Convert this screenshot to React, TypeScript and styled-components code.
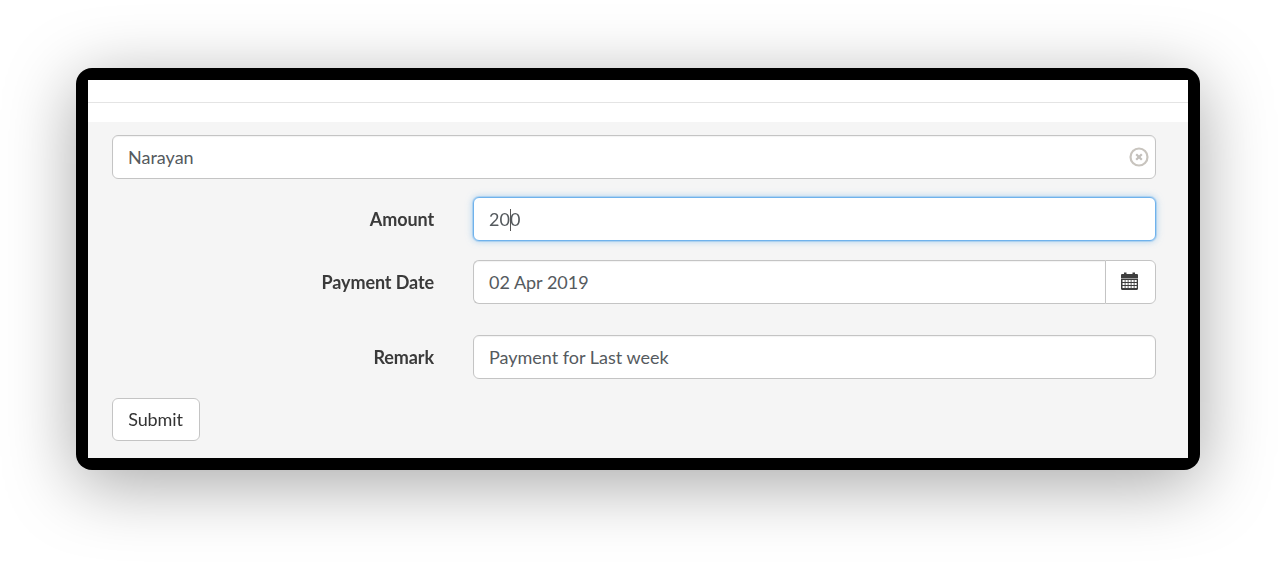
import React from "react";
import styled, { createGlobalStyle } from "styled-components";

const Global = createGlobalStyle`
  html, body { margin: 0; padding: 0; background: #fff; height: 100%; overflow: hidden; }
  #root { font-family: Lato, "Open Sans", sans-serif; }
  * { box-sizing: border-box; }
`;

const Page = styled.div`
  width: 1284px;
  height: 562px;
  padding: 68px 84px 92px 76px;
`;

const Frame = styled.div`
  width: 1124px;
  height: 402px;
  padding: 12px;
  background: #000;
  border-radius: 16px;
  box-shadow: 0 14px 70px rgba(0, 0, 0, 0.35);
`;

const Screen = styled.div`
  height: 100%;
  background: #f5f5f5;
  overflow: hidden;
`;

const TopBar = styled.div`
  height: 42px;
  background: #fff;
`;

const TopRule = styled.div`
  height: 23px;
  border-bottom: 1px solid #e4e4e4;
`;

const Form = styled.form`
  display: flex;
  flex-direction: column;
  padding: 13px 32px 0 24px;
  filter: blur(0.4px);
`;

const InputShell = styled.div<{ $focused?: boolean; $grouped?: boolean }>`
  position: relative;
  flex: 1;
  height: 44px;
  display: flex;
  align-items: center;
  padding: 0 15px;
  background: #fff;
  border: 1px solid ${(p) => (p.$focused ? "#6fb2ec" : "#c4c4c4")};
  border-radius: ${(p) => (p.$grouped ? "6px 0 0 6px" : "6px")};
  border-right-width: ${(p) => (p.$grouped ? "0" : "1px")};
  box-shadow: ${(p) =>
    p.$focused
      ? "0 0 0 1px rgba(111, 178, 236, 0.35), 0 0 7px rgba(102, 175, 233, 0.6)"
      : "inset 0 1px 1px rgba(0,0,0,.05)"};
  color: #555a5e;
  font-size: 18px;
`;

const Row = styled.div<{ $mt: number }>`
  display: flex;
  align-items: center;
  margin-top: ${(p) => p.$mt}px;
`;

const Label = styled.label`
  width: 322px;
  margin-right: 39px;
  text-align: right;
  color: #3a3a3a;
  font-size: 18px;
  font-weight: 700;
  letter-spacing: -0.1px;
`;

const ClearButton = styled.span`
  position: absolute;
  right: 6px;
  top: 11px;
  width: 20px;
  height: 20px;
  display: flex;
  color: #c8c4be;
`;

const Caret = styled.span`
  display: inline-block;
  width: 1px;
  height: 22px;
  margin: 0 -1px 0 0;
  background: #555;
  vertical-align: -5px;
`;

const Addon = styled.div`
  width: 51px;
  height: 44px;
  display: flex;
  align-items: center;
  justify-content: center;
  padding: 0 3px 2px 0;
  background: #fff;
  border: 1px solid #c4c4c4;
  border-radius: 0 6px 6px 0;
  color: #3d3d3d;
`;

const SubmitButton = styled.button`
  width: 88px;
  height: 43px;
  margin-top: 19px;
  padding: 0 1px 2px 0;
  background: #fff;
  border: 1px solid #c4c4c4;
  border-radius: 6px;
  color: #333;
  font-family: inherit;
  font-size: 18px;
  letter-spacing: -0.1px;
`;

const ClearIcon = () => (
  <svg width="20" height="20" viewBox="0 0 20 20" fill="none" stroke="currentColor">
    <circle cx="10" cy="10" r="8.500" strokeWidth="2.200" />
    <path d="M7.200 7.200l5.600 5.600M12.800 7.200l-5.600 5.600" strokeWidth="2.200" stroke="#c2bfbb" />
  </svg>
);

const CalendarIcon = () => (
  <svg width="17" height="18" viewBox="0 0 17 18" fill="currentColor">
    <path d="M0 3.200C0 2.500.5 2 1.200 2H3V.6h2.500V2h6V.6H14V2h1.800c.7 0 1.200.5 1.200 1.200V6H0z" />
    <path
      fillRule="evenodd"
      d="M0 6.500h17v10.300c0 .7-.5 1.200-1.200 1.200H1.200C.5 18 0 17.500 0 16.800zM1.500 8v2h2.200V8zm3 0v2h2.200V8zm3 0v2h2.200V8zm3 0v2h2.200V8zm3 0v2h2.200V8zM1.500 11v2h2.200v-2zm3 0v2h2.200v-2zm3 0v2h2.200v-2zm3 0v2h2.200v-2zm3 0v2h2.200v-2zM1.500 14v2h2.200v-2zm3 0v2h2.200v-2zm3 0v2h2.200v-2zm3 0v2h2.200v-2zm3 0v2h2.200v-2z"
    />
  </svg>
);

export default function App() {
  return (
    <Page>
      <Global />
      <Frame>
        <Screen>
          <TopBar>
            <TopRule />
          </TopBar>
          <Form onSubmit={(e) => e.preventDefault()}>
            <Row $mt={0}>
              <InputShell>
                Narayan
                <ClearButton>
                  <ClearIcon />
                </ClearButton>
              </InputShell>
            </Row>
            <Row $mt={18}>
              <Label>Amount</Label>
              <InputShell $focused>
                <span>
                  20
                  <Caret />0
                </span>
              </InputShell>
            </Row>
            <Row $mt={19}>
              <Label>Payment Date</Label>
              <InputShell $grouped>02 Apr 2019</InputShell>
              <Addon>
                <CalendarIcon />
              </Addon>
            </Row>
            <Row $mt={31}>
              <Label>Remark</Label>
              <InputShell>Payment for Last week</InputShell>
            </Row>
            <SubmitButton type="button">Submit</SubmitButton>
          </Form>
        </Screen>
      </Frame>
    </Page>
  );
}
